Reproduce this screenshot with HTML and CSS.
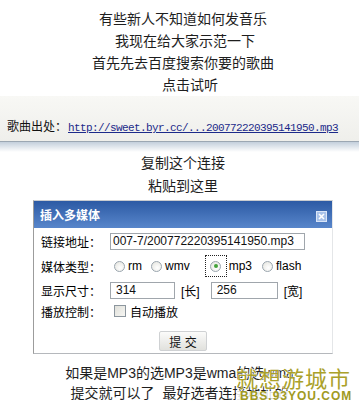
FILE: index.html
```html
<!DOCTYPE html>
<html lang="zh-CN">

<head>
    <meta charset="UTF-8">
    <meta name="viewport" content="width=device-width, initial-scale=1.0">
    <title>插入多媒体 - 示范</title>
    <link rel="stylesheet" href="styles.css">
</head>

<body>

    <div class="intro">
        <p>有些新人不知道如何发音乐</p>
        <p>&nbsp;我现在给大家示范一下</p>
        <p>首先先去百度搜索你要的歌曲</p>
        <p>　点击试听</p>
    </div>

    <!-- Song source bar -->
    <div class="source">
        <span class="source-label">歌曲出处：</span><a href="#" class="source-link">http://sweet.byr.cc/...200772220395141950.mp3</a>
    </div>
    <div class="band"></div>

    <div class="step">
        <p>复制这个连接</p>
        <p>粘贴到这里</p>
    </div>

    <!-- Insert media dialog -->
    <div class="dialog">
        <div class="dialog-title">
            <span>插入多媒体</span>
            <span class="close">
                <svg width="11" height="11" viewBox="0 0 11 11">
                    <rect x="0.5" y="0.5" width="10" height="10" fill="#a8c2ea" stroke="#d9e5f7" />
                    <path d="M3 3 L8 8 M8 3 L3 8" stroke="#fff" stroke-width="1.6" />
                </svg>
            </span>
        </div>

        <div class="dialog-body">
            <div class="row row-url">
                <span class="label">链接地址：</span>
                <input type="text" class="field field-url" value="007-7/200772220395141950.mp3">
            </div>

            <div class="row row-type">
                <span class="label">媒体类型：</span>
                <span class="opt opt-rm"><span class="radio"></span>rm</span>
                <span class="opt opt-wmv"><span class="radio"></span>wmv</span>
                <span class="opt opt-mp3"><span class="focus"><span class="radio on"></span></span>mp3</span>
                <span class="opt opt-flash"><span class="radio"></span>flash</span>
            </div>

            <div class="row row-size">
                <span class="label">显示尺寸：</span>
                <input type="text" class="field field-w" value="314">
                <span class="unit">[长]</span>
                <input type="text" class="field field-h" value="256">
                <span class="unit">[宽]</span>
            </div>

            <div class="row row-play">
                <span class="label">播放控制：</span>
                <span class="check"></span>
                <span>自动播放</span>
            </div>

            <div class="actions">
                <button type="button" class="btn">提 交</button>
            </div>
        </div>
    </div>

    <div class="note">
        <p>如果是MP3的选MP3是wma的选wma</p>
        <p>提交就可以了&nbsp; 最好选者连接地址的</p>
    </div>

    <!-- Forum watermark -->
    <div class="watermark">
        <div class="wm-name">就想游城市</div>
        <div class="wm-url">BBS.93YOU.COM</div>
    </div>

</body>

</html>
```

FILE: styles.css
```css
/* General Reset */
* {
    margin: 0;
    padding: 0;
    box-sizing: border-box;
}

body {
    font-family: "Liberation Sans", "Noto Sans CJK SC", sans-serif;
    background: #fff;
    color: #1e1e1e;
    width: 359px;
    height: 406px;
    overflow: hidden;
    position: relative;
}

/* Intro lines */
.intro {
    padding: 8px 0 0 7px;
    text-align: center;
    font-size: 14px;
    line-height: 22px;
}

/* Source bar */
.source {
    height: 46px;
    padding: 22px 0 0 7px;
    font-size: 12px;
    line-height: 18px;
    background: linear-gradient(#f8f8f5, #efefeb);
    border-bottom: 1px solid #9ba7b3;
    white-space: nowrap;
}

.source-label {
    color: #111;
}

.source-link {
    margin-left: 1px;
    font-family: "Liberation Mono", monospace;
    font-size: 11px;
    letter-spacing: -0.6px;
    color: #1c2a8a;
}

.band {
    height: 10px;
    background: linear-gradient(#c3cfdc, #fff);
}

.step {
    padding-left: 7px;
    text-align: center;
    font-size: 14px;
    line-height: 23px;
}

/* Dialog */
.dialog {
    width: 300px;
    margin: 2px 0 0 33px;
    border: 1px solid #c9ccd0;
    border-left-color: #9c9c9c;
    border-bottom-color: #b5b8bc;
    border-right-color: #e4e6e8;
    font-size: 12px;
    color: #000;
}

.dialog-title {
    height: 27px;
    display: flex;
    align-items: center;
    justify-content: space-between;
    padding: 0 5px 0 6px;
    background: linear-gradient(#2c5aa4, #5886cb);
    color: #fff;
    font-weight: bold;
}

.close {
    display: flex;
    margin-top: 3px;
}

.dialog-body {
    padding: 4px 0 2px 7px;
}

.row {
    display: flex;
    align-items: center;
}

.label {
    width: 69px;
    flex-shrink: 0;
}

.row-url {
    height: 18px;
}

.row-type {
    height: 24px;
    margin-top: 4px;
}

.row-size {
    height: 18px;
    margin-top: 3px;
}

.row-play {
    height: 16px;
    margin-top: 4px;
}

.field {
    height: 17px;
    border: 1px solid #a0a6ac;
    padding: 0 2px;
    font-family: "Liberation Sans", sans-serif;
    font-size: 12px;
    color: #111;
    outline: none;
}

.field-url {
    width: 195px;
}

.field-w {
    width: 65px;
    padding-left: 5px;
}

.field-h {
    width: 67px;
    padding-left: 5px;
}

.unit {
    margin: 0 11px 0 6px;
}

/* Radios */
.opt {
    display: inline-flex;
    align-items: center;
    gap: 3px;
}

.opt-rm {
    margin-left: 4px;
}

.opt-wmv {
    margin-left: 9px;
}

.opt-mp3 {
    margin-left: 15px;
    gap: 2px;
}

.opt-flash {
    margin-left: 10px;
}

.radio {
    width: 11px;
    height: 11px;
    border-radius: 50%;
    border: 1px solid #9aa5ae;
    background: radial-gradient(circle at 60% 65%, #fff, #e2e2dc);
    display: flex;
    align-items: center;
    justify-content: center;
}

.radio.on::after {
    content: '';
    width: 4px;
    height: 4px;
    border-radius: 50%;
    background: #43a23a;
}

.focus {
    width: 22px;
    height: 22px;
    border: 1px dotted #222;
    display: flex;
    align-items: center;
    justify-content: center;
}

.check {
    width: 12px;
    height: 12px;
    border: 1px solid #8c969e;
    background: linear-gradient(135deg, #e0e0da, #f6f6f3);
    margin: 0 4px 0 4px;
}

/* Submit */
.actions {
    display: flex;
    justify-content: center;
    margin: 12px 7px 0 0;
}

.btn {
    width: 48px;
    height: 20px;
    border: 1px solid #cfd1d3;
    border-radius: 2px;
    background: linear-gradient(#fbfbfa, #e1e1dd);
    font-family: "Liberation Sans", "Noto Sans CJK SC", sans-serif;
    font-size: 12px;
    color: #111;
}

/* Bottom note */
.note {
    margin-top: 9px;
    text-align: center;
    font-size: 14px;
    line-height: 20px;
    white-space: nowrap;
}

/* Watermark */
.watermark {
    position: absolute;
    left: 236px;
    top: 364px;
    width: 123px;
}

.wm-name {
    font-family: "Noto Sans CJK SC", sans-serif;
    font-size: 22px;
    line-height: 26px;
    letter-spacing: 1px;
    color: #aaa12a;
    text-shadow: 0 0 2px #fff, 0 0 1px #fff;
}

.wm-url {
    margin-top: 1px;
    padding-left: 4px;
    font-size: 12px;
    line-height: 11px;
    font-weight: bold;
    letter-spacing: 1px;
    color: #a19a22;
    background: rgba(255, 255, 255, 0.85);
}
```
